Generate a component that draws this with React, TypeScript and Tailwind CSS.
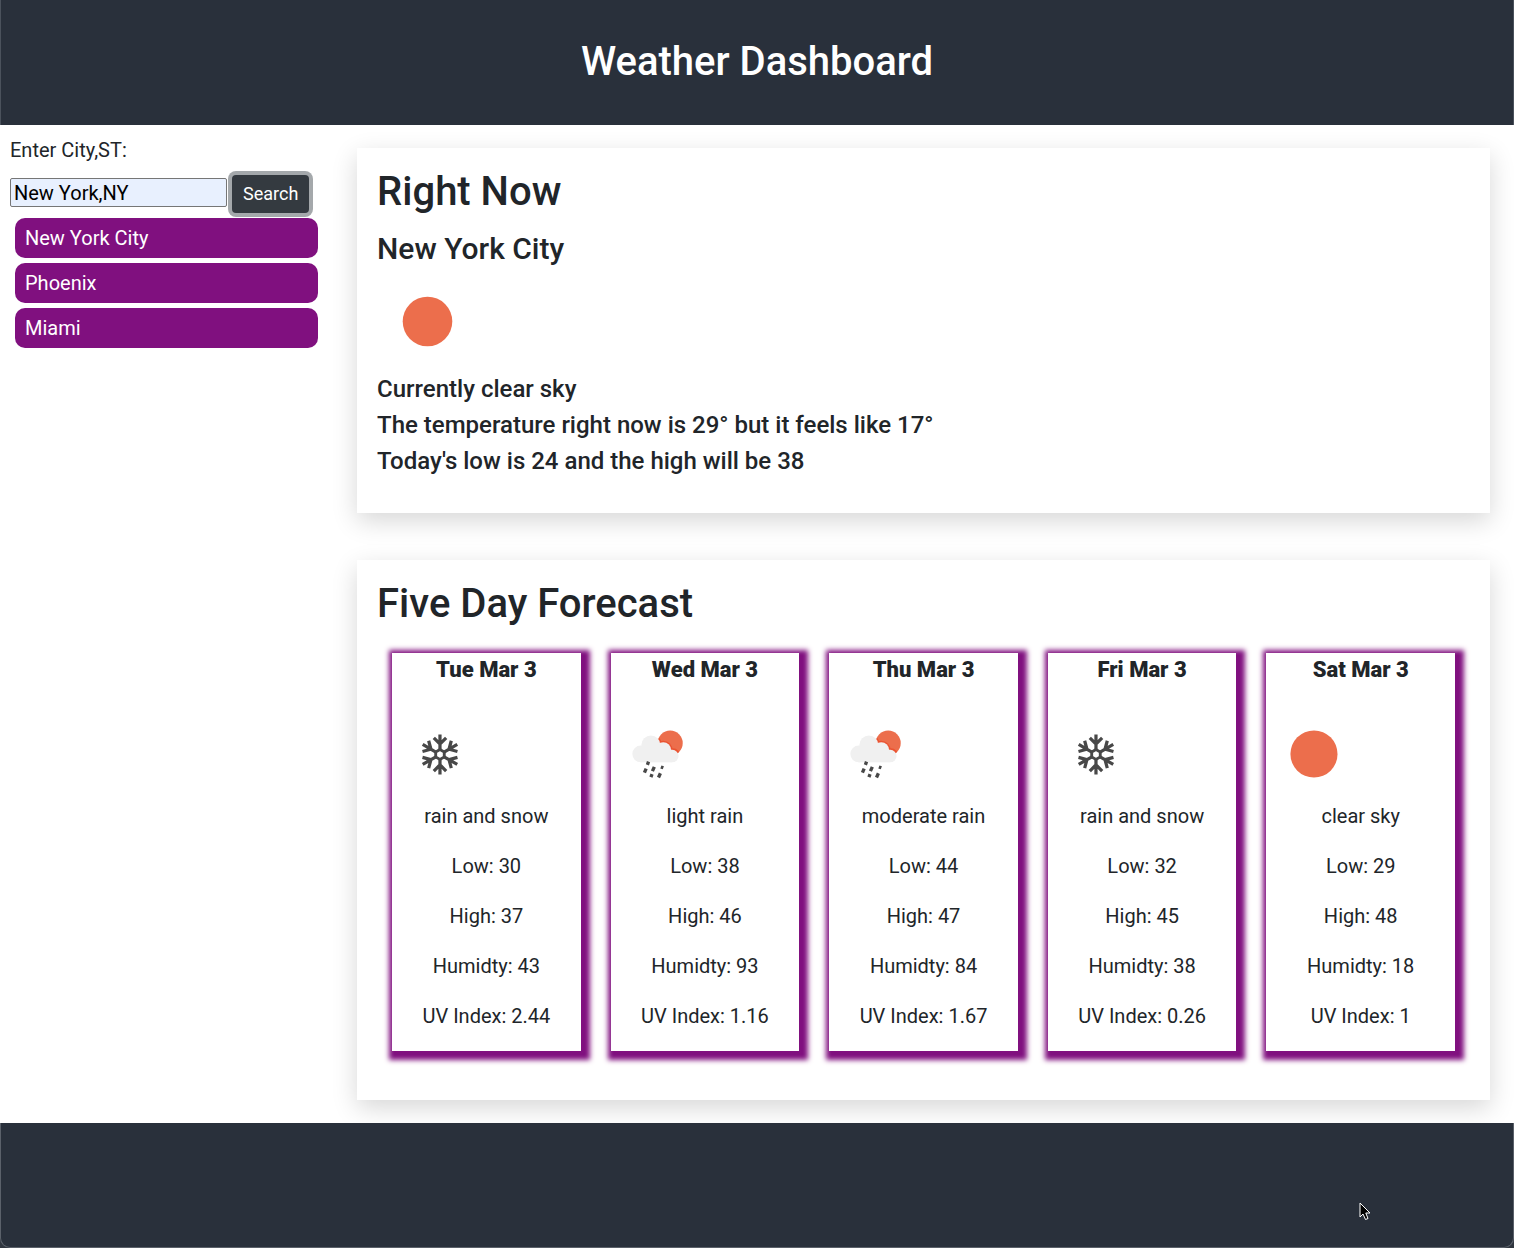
type IconKind = "clear" | "snow" | "rain";

const cities = ["New York City", "Phoenix", "Miami"];

const days: { date: string; icon: IconKind; sky: string; low: number; high: number; humidity: number; uv: number }[] = [
  { date: "Tue Mar 3", icon: "snow", sky: "rain and snow", low: 30, high: 37, humidity: 43, uv: 2.44 },
  { date: "Wed Mar 3", icon: "rain", sky: "light rain", low: 38, high: 46, humidity: 93, uv: 1.16 },
  { date: "Thu Mar 3", icon: "rain", sky: "moderate rain", low: 44, high: 47, humidity: 84, uv: 1.67 },
  { date: "Fri Mar 3", icon: "snow", sky: "rain and snow", low: 32, high: 45, humidity: 38, uv: 0.26 },
  { date: "Sat Mar 3", icon: "clear", sky: "clear sky", low: 29, high: 48, humidity: 18, uv: 1 },
];

function WeatherIcon({ kind, className }: { kind: IconKind; className: string }) {
  return (
    <svg viewBox="0 0 100 100" className={className} aria-hidden="true">
      {kind === "clear" && <circle cx="50.5" cy="50.5" r="24.8" fill="#ec6e4c" />}
      {kind === "snow" && (
        <g stroke="#484848" strokeWidth="3.4" fill="none">
          {[0, 60, 120, 180, 240, 300].map((a) => (
            <g key={a} transform={`rotate(${a} 50.5 51)`}>
              <path d="M50.5 30V46M44 33.5L50.5 40L57 33.5" />
            </g>
          ))}
          <path d="M50.5 45.8L55 48.4V53.600L50.5 56.200L46 53.600V48.400Z" strokeWidth="3" />
        </g>
      )}
      {kind === "rain" && (
        <g>
          <clipPath id="rain-sun">
            <circle cx="62.3" cy="39" r="13.2" />
          </clipPath>
          <circle cx="62.3" cy="39" r="13.2" fill="#ec6e4c" />
          <g clipPath="url(#rain-sun)" fill="#ea5331">
            <circle cx="42" cy="41" r="11.5" />
            <circle cx="55" cy="46.5" r="9.8" />
            <circle cx="65" cy="53" r="8.400" />
          </g>
          <g fill="#f0f0f0">
            <circle cx="31.3" cy="50.5" r="8.800" />
            <circle cx="42" cy="41" r="10" />
            <circle cx="55" cy="46.500" r="8.300" />
            <circle cx="64.500" cy="52.700" r="6.600" />
            <path d="M31 46H64V59.300H31Z" />
          </g>
          <g stroke="#484848" strokeWidth="3.500">
            <path d="M39.500 58.600L38.300 62M37 65.800L35.200 70.200M45.600 64L43.600 68.600M43.200 71.800L42 74.800M52 70.800L50 75.200" />
            <path d="M54.400 63L53.200 66.200" strokeWidth="2.800" />
          </g>
        </g>
      )}
    </svg>
  );
}

export default function App() {
  return (
    <div className="relative flex min-h-screen flex-col bg-white font-[Roboto,sans-serif] text-xl leading-[30px] text-[#212529]">
      <header className="flex h-[125px] items-center justify-center border-x border-[#4b525c] bg-[#29303b] pb-0.5">
        <h1 className="text-[40px] leading-[48px] font-medium text-white">Weather Dashboard</h1>
      </header>

      <div className="flex flex-1">
        <aside className="w-[22%] shrink-0 p-[10px]">
          <form onSubmit={(e) => e.preventDefault()}>
            <label htmlFor="city" className="block">
              Enter City,ST:
            </label>
            <div className="mt-[10px] flex items-start gap-[5px]">
              <input
                id="city"
                type="text"
                defaultValue="New York,NY"
                className="mt-[3px] h-[29px] w-[217px] min-w-0 rounded-[2px] border border-[#767676] bg-[#e8f0fe] px-[3px] text-black outline-none"
              />
              <button
                type="submit"
                className="h-[38px] shrink-0 rounded bg-[#343a40] px-[11px] text-lg leading-6 text-white ring-4 ring-[#a4a8ab]"
              >
                Search
              </button>
            </div>
          </form>
          <ul className="mx-[5px] mt-[5px] flex flex-col gap-[5px]">
            {cities.map((c) => (
              <li key={c}>
                <button type="button" className="block w-full rounded-[10px] bg-[#80107f] px-[10px] py-[5px] text-left text-white">
                  {c}
                </button>
              </li>
            ))}
          </ul>
        </aside>

        <main className="mx-6 my-[23px] flex min-w-0 flex-1 flex-col gap-[47px]">
          <section className="px-5 pt-5 pb-[34px] shadow-[0_8px_24px_rgba(0,0,0,0.16)]">
            <h2 className="text-[40px] leading-[48px] font-medium">Right Now</h2>
            <h3 className="mt-[15px] text-[30px] leading-9 font-medium">New York City</h3>
            <WeatherIcon kind="clear" className="mt-1 size-[100px]" />
            <div className="text-2xl leading-9 font-medium">
              <p>Currently clear sky</p>
              <p>The temperature right now is 29° but it feels like 17°</p>
              <p>Today's low is 24 and the high will be 38</p>
            </div>
          </section>

          <section className="px-5 pt-5 pb-[49px] shadow-[0_8px_24px_rgba(0,0,0,0.16)]">
            <h2 className="text-[40px] leading-[48px] font-medium">Five Day Forecast</h2>
            <div className="mt-[25px] grid grid-cols-5 gap-[30px] px-[15px]">
              {days.map((d) => (
                <article key={d.date} className="flex flex-col bg-white pb-5 text-center shadow-[3px_3px_5px_6px_#80107f]">
                  <h4 className="mb-5 text-[22px] leading-[33px] font-black">{d.date}</h4>
                  <WeatherIcon kind={d.icon} className="size-[95px]" />
                  <div className="flex flex-col gap-5">
                    <p>{d.sky}</p>
                    <p>Low: {d.low}</p>
                    <p>High: {d.high}</p>
                    <p>Humidty: {d.humidity}</p>
                    <p>UV Index: {d.uv}</p>
                  </div>
                </article>
              ))}
            </div>
          </section>
        </main>
      </div>

      <div className="bg-[#30363f]">
        <footer className="relative h-[125px] rounded-b-[10px] border-x border-b border-[#5b616a] bg-[#29303b]">
          <svg viewBox="0 0 12 19" className="absolute right-[142px] bottom-[26px] h-[19px] w-3" aria-hidden="true">
            <path d="M1 1V15L4 12L6.500 17.500L9 16.500L6.800 11H11Z" fill="#000" stroke="#fff" strokeWidth="1" />
          </svg>
        </footer>
      </div>
    </div>
  );
}
